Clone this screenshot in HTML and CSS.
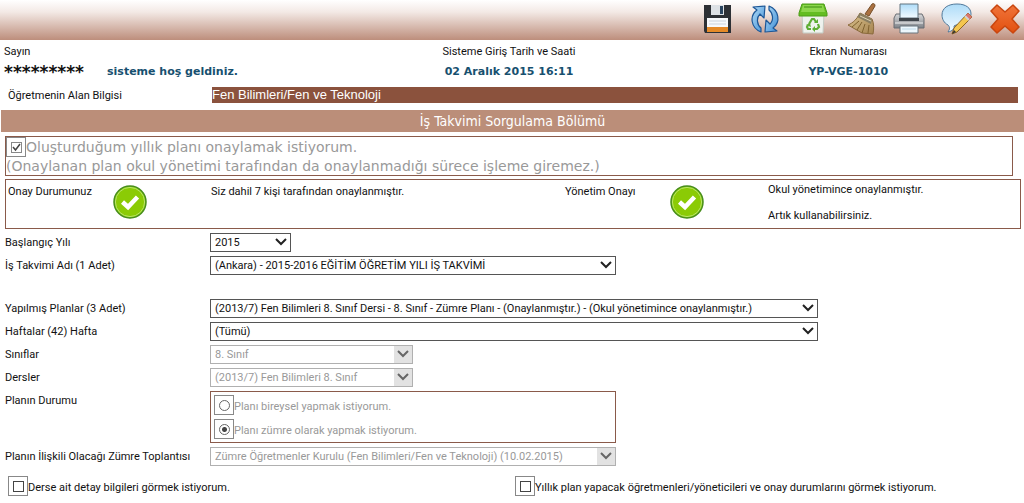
FILE: index.html
```html
<!DOCTYPE html>
<html lang="tr">
<head>
<meta charset="utf-8">
<title>İş Takvimi Sorgulama</title>
<link rel="stylesheet" href="styles.css">
</head>
<body>
<svg class="defs" width="0" height="0" aria-hidden="true">
  <defs>
    <linearGradient id="sky" x1="0" y1="0" x2="0" y2="1"><stop offset="0" stop-color="#aedcf8"/><stop offset="1" stop-color="#f4fbff"/></linearGradient>
    <linearGradient id="blue" x1="0" y1="0" x2="1" y2="1"><stop offset="0" stop-color="#b4dcf6"/><stop offset="1" stop-color="#3e8ed6"/></linearGradient>
    <linearGradient id="red" x1="0" y1="0" x2="0" y2="1"><stop offset="0" stop-color="#f0743a"/><stop offset="1" stop-color="#e2500f"/></linearGradient>
    <linearGradient id="steel" x1="0" y1="0" x2="0" y2="1"><stop offset="0" stop-color="#d8d8da"/><stop offset="1" stop-color="#7e8288"/></linearGradient>
    <linearGradient id="straw" x1="0" y1="0" x2="1" y2="1"><stop offset="0" stop-color="#dcc490"/><stop offset="1" stop-color="#a58450"/></linearGradient>
    <symbol id="ok" viewBox="0 0 34 34">
      <circle cx="17" cy="17" r="16" fill="#8bcb05" stroke="#478d1c" stroke-width="1.5"/>
      <circle cx="17" cy="17" r="14.6" fill="none" stroke="#b8e46a"/>
      <path d="M9.500 17l5.500 5 9.500-10" fill="none" stroke="#fff" stroke-width="4.500"/>
    </symbol>
  </defs>
</svg>

<header class="toolbar">
  <button class="tool" type="button" aria-label="Kaydet">
    <svg viewBox="0 0 32 32"><path d="M3 2h27v28H4l-1-2z" fill="#2d3035"/><path d="M10 2h13v10H10z" fill="#dde1e5"/><path d="M19 3h3v8h-3z" fill="#2b4560"/><path d="M6 15h21v10H6z" fill="#f7f9fc"/><path d="M8 18h17M8 21h17" stroke="#cbd3dd"/><path d="M6 24h21v5H6z" fill="#e58a28"/></svg>
  </button>
  <button class="tool" type="button" aria-label="Yenile">
    <svg viewBox="0 0 32 32"><g fill="url(#blue)" stroke="#1d5797" stroke-width="1.2" stroke-linejoin="round"><path d="M12 29C2 25 0 13 8 7L4 4l12-1-1 12-4-4c-4 4-3 11 1 14z"/><path d="M20 3C30 7 32 19 24 25l4 3-12 1 1-12 4 4c4-4 3-11-1-14z"/></g></svg>
  </button>
  <button class="tool" type="button" aria-label="Sil">
    <svg viewBox="0 0 32 32"><path d="M5 11h22l-1 19H6z" fill="#eef2ee" stroke="#c3cbc3"/><path d="M5 1h22l3 9v3H2v-3z" fill="#63bd22" stroke="#4d9d19"/><path d="M6 2h20l2 7H4z" fill="#8cd64c"/><path d="M7 4h18" stroke="#56a425" stroke-width="1.5"/><g fill="none" stroke="#5fae35" stroke-width="2.200"><path d="M12 21l3-5h2l2 3M21 21l1 3-2 2h-3M14 26h-3l-1-2 1-2"/></g><path d="M17 20h4v-4zM18 23v6l-3-3zM9 22l4-2 1 4z" fill="#5fae35"/></svg>
  </button>
  <button class="tool" type="button" aria-label="Temizle">
    <svg viewBox="0 0 32 32"><path d="M20 11L27 1c2-1 3 0 3 2l-6 10z" fill="#aa7040" stroke="#76502a"/><path d="M15 10l12 6c2 4 2 10 1 15L17 30 3 22c5-2 9-6 12-12z" fill="url(#straw)" stroke="#8a6a3c"/><path d="M15 10l12 6-1 5-14-7z" fill="#8b7f62"/><path d="M14 18L7 24M17 19l-5 8M20 21l-3 9M24 22l-1 8" stroke="#80622f"/><path d="M15 13l11 5" stroke="#ddd2b4"/></svg>
  </button>
  <button class="tool" type="button" aria-label="Yazdır">
    <svg viewBox="0 0 32 32"><path d="M3 11h26l2 4v10H1V15z" fill="url(#steel)" stroke="#686c72"/><path d="M7 1h18v14H7z" fill="url(#sky)" stroke="#637480"/><path d="M6 15h20v3H6z" fill="#40454b"/><path d="M2 20h28" stroke="#f2f2f2"/><path d="M7 23h18v7H7z" fill="#edf7fd" stroke="#68747d"/><path d="M9 26h14" stroke="#bdd9e8"/></svg>
  </button>
  <button class="tool" type="button" aria-label="Not">
    <svg viewBox="0 0 32 32"><path d="M16 1c9 0 14 4 14 10s-6 11-15 11l-2 1c1 3-2 5-6 6 2-3 2-5 0-7-4-2-6-6-6-10C1 5 7 1 16 1z" fill="url(#sky)" stroke="#50799b"/><path d="M27 10l4 4-15 15-5 2 2-6z" fill="#f4c64f" stroke="#8d6425"/><path d="M27 10l4 4-3 3-4-4z" fill="#da766e"/><path d="M24 13l4 4" stroke="#d2d2d2" stroke-width="2"/><path d="M13 27l2 2-4 2z" fill="#333"/></svg>
  </button>
  <button class="tool" type="button" aria-label="Kapat">
    <svg viewBox="0 0 32 32"><path d="M8 2l8 7 8-7 6 6-7 8 7 8-6 6-8-7-8 7-6-6 7-8-7-8z" fill="url(#red)" stroke="#c9460f" stroke-linejoin="round" stroke-width="1.5"/></svg>
  </button>
</header>

<main>
  <section class="session">
    <div class="session-user">
      <div class="caption">Sayın</div>
      <div class="welcome"><span class="masked">*********</span><strong class="value">sisteme hoş geldiniz.</strong></div>
    </div>
    <div class="session-item"><div class="caption">Sisteme Giriş Tarih ve Saati</div><strong class="value">02 Aralık 2015 16:11</strong></div>
    <div class="session-item"><div class="caption">Ekran Numarası</div><strong class="value">YP-VGE-1010</strong></div>
  </section>

  <section class="branch">
    <div class="branch-label">Öğretmenin Alan Bilgisi</div>
    <div class="branch-name">Fen Bilimleri/Fen ve Teknoloji</div>
  </section>

  <h1 class="title">İş Takvimi Sorgulama Bölümü</h1>

  <section class="approve">
    <label class="approve-label"><span class="frame"><input class="check" type="checkbox" checked disabled></span><span>Oluşturduğum yıllık planı onaylamak istiyorum.</span></label>
    <div>(Onaylanan plan okul yönetimi tarafından da onaylanmadığı sürece işleme giremez.)</div>
  </section>

  <section class="status">
    <div class="status-name">Onay Durumunuz</div>
    <svg class="ok"><use href="#ok"/></svg>
    <div class="status-name">Siz dahil 7 kişi tarafından onaylanmıştır.</div>
    <div class="status-name">Yönetim Onayı</div>
    <svg class="ok"><use href="#ok"/></svg>
    <div class="status-text"><p>Okul yönetimince onaylanmıştır.</p><p>Artık kullanabilirsiniz.</p></div>
  </section>

  <form class="form">
    <label for="yil">Başlangıç Yılı</label>
    <select class="select w-year" id="yil"><option>2015</option></select>
    <label for="takvim">İş Takvimi Adı (1 Adet)</label>
    <select class="select w-medium" id="takvim"><option>(Ankara) - 2015-2016 EĞİTİM ÖĞRETİM YILI İŞ TAKVİMİ</option></select>
    <label class="apart" for="planlar">Yapılmış Planlar (3 Adet)</label>
    <select class="select w-large apart" id="planlar"><option>(2013/7) Fen Bilimleri 8. Sınıf Dersi - 8. Sınıf - Zümre Planı - (Onaylanmıştır.) - (Okul yönetimince onaylanmıştır.)</option></select>
    <label for="haftalar">Haftalar (42) Hafta</label>
    <select class="select w-large" id="haftalar"><option>(Tümü)</option></select>
    <label for="siniflar">Sınıflar</label>
    <select class="select w-small" id="siniflar" disabled><option>8. Sınıf</option></select>
    <label for="dersler">Dersler</label>
    <select class="select w-small" id="dersler" disabled><option>(2013/7) Fen Bilimleri 8. Sınıf</option></select>
    <div id="durum">Planın Durumu</div>
    <div class="radios w-medium" role="radiogroup" aria-labelledby="durum">
      <label class="option muted"><span class="frame"><input class="radio" type="radio" name="durum" disabled></span><span>Planı bireysel yapmak istiyorum.</span></label>
      <label class="option muted"><span class="frame"><input class="radio" type="radio" name="durum" checked disabled></span><span>Planı zümre olarak yapmak istiyorum.</span></label>
    </div>
    <label for="toplanti">Planın İlişkili Olacağı Zümre Toplantısı</label>
    <select class="select w-medium" id="toplanti" disabled><option>Zümre Öğretmenler Kurulu (Fen Bilimleri/Fen ve Teknoloji) (10.02.2015)</option></select>
  </form>

  <section class="extras">
    <label class="option"><span class="frame"><input class="check" type="checkbox"></span><span>Derse ait detay bilgileri görmek istiyorum.</span></label>
    <label class="option"><span class="frame"><input class="check" type="checkbox"></span><span>Yıllık plan yapacak öğretmenleri/yöneticileri ve onay durumlarını görmek istiyorum.</span></label>
  </section>
</main>
</body>
</html>
```
FILE: styles.css
```css
* { box-sizing: border-box; }

body {
  margin: 0;
  background: #fff;
  color: #111;
  font: 11px/16px Roboto, sans-serif;
}

.defs { position: absolute; }

.toolbar {
  display: flex;
  justify-content: flex-end;
  gap: 16px;
  height: 40px;
  padding: 3px 3px 0 0;
  background: linear-gradient(#fff, #f3e9e5 30%, #bd8e7c);
}

.tool {
  width: 32px;
  height: 32px;
  padding: 0;
  border: 0;
  background: none;
}

.tool svg { display: block; width: 32px; height: 32px; }

.session {
  display: grid;
  grid-template-columns: repeat(3, 1fr);
  padding: 4px 6px 7px 0;
}

.session-user { padding-left: 4px; }
.session-item { text-align: center; }
.caption { line-height: 16px; margin-bottom: 4px; }
.welcome { display: flex; gap: 23px; }
.value { display: block; color: #17506f; font: bold 11px/16px "DejaVu Sans", sans-serif; }
.masked { font: bold 17px/16px "DejaVu Sans", sans-serif; }

.branch {
  display: grid;
  grid-template-columns: 204px 1fr;
  padding: 0 6px 7px 8px;
}

.branch-label { padding-top: 1px; line-height: 15px; }

.branch-name {
  background: #8b523d;
  color: #fff;
  font: 13px/16px "Liberation Sans", sans-serif;
}

.title {
  margin: 0 0 4px 1px;
  background: #bb8e79;
  color: #fff;
  font: 14px/22px "DejaVu Sans Condensed", sans-serif;
  text-align: center;
}

.approve {
  margin: 0 11px 3px 5px;
  border: 1px solid #8a5a4a;
  color: #999;
  font: 14px/18px "DejaVu Sans", sans-serif;
}

.approve-label { display: flex; align-items: center; }

.frame {
  display: flex;
  flex: none;
  align-items: center;
  justify-content: center;
  width: 20px;
  height: 20px;
  border: 1px solid #888;
}

.check, .radio {
  appearance: none;
  width: 11px;
  height: 11px;
  margin: 0;
  border: 1px solid #444;
  background: #fff;
}

.check:checked {
  background: url("data:image/svg+xml,%3Csvg xmlns='http://www.w3.org/2000/svg' viewBox='0 0 9 9'%3E%3Cpath d='M1 4l2.500 3L8 1' fill='none' stroke='%23444' stroke-width='1.500'/%3E%3C/svg%3E") center / 9px no-repeat;
}

.check:disabled { border-color: #888; }

.radio { border-radius: 50%; border-color: #666; }
.radio:checked { background: radial-gradient(circle, #444 0 2px, #fff 3px); }

.status {
  display: grid;
  grid-template-columns: 105px 98px 354px 105px 98px 1fr;
  min-height: 50px;
  margin: 0 3px 4px 5px;
  padding: 2px 2px 0;
  border: 1px solid #8a5a4a;
}

.ok { width: 34px; height: 34px; margin-top: 3px; }
.status-name { padding-top: 2px; }
.status-text p { margin: 0; }
.status-text p + p { margin-top: 10px; }

.form {
  display: grid;
  grid-template-columns: 205px minmax(0, 1fr);
  row-gap: 4px;
  padding-left: 5px;
  line-height: 19px;
}

.apart { margin-top: 20px; }

.select {
  appearance: none;
  height: 19px;
  padding: 0 20px 0 4px;
  border: 1px solid #555;
  border-radius: 0;
  background: #fff url("data:image/svg+xml,%3Csvg xmlns='http://www.w3.org/2000/svg' viewBox='0 0 18 17'%3E%3Cpath d='M4 5l5 5 5-5' fill='none' stroke='%23222' stroke-width='2'/%3E%3C/svg%3E") right center / 18px 17px no-repeat;
  color: #111;
  font: inherit;
  line-height: 17px;
  max-width: 100%;
}

.select:disabled {
  border-color: #b0b0b0;
  background-image: url("data:image/svg+xml,%3Csvg xmlns='http://www.w3.org/2000/svg' viewBox='0 0 18 17'%3E%3Cpath d='M0 0h18v17H0z' fill='%23e2e2e2'/%3E%3Cpath d='M4 5l5 5 5-5' fill='none' stroke='%23666' stroke-width='2'/%3E%3C/svg%3E");
  color: #999;
  opacity: 1;
}

.w-year { width: 81px; }
.w-small { width: 203px; }
.w-medium { width: 406px; }
.w-large { width: 608px; }

.radios {
  display: flex;
  flex-direction: column;
  gap: 4px;
  max-width: 100%;
  padding: 3px;
  border: 1px solid #8a5a4a;
}

.option { display: flex; align-items: center; line-height: 16px; }
.option > span:last-child { padding-top: 3px; }
.muted { color: #999; }

.extras {
  display: grid;
  grid-template-columns: 1fr 1fr;
  padding: 10px 2px 0 8px;
}
```
